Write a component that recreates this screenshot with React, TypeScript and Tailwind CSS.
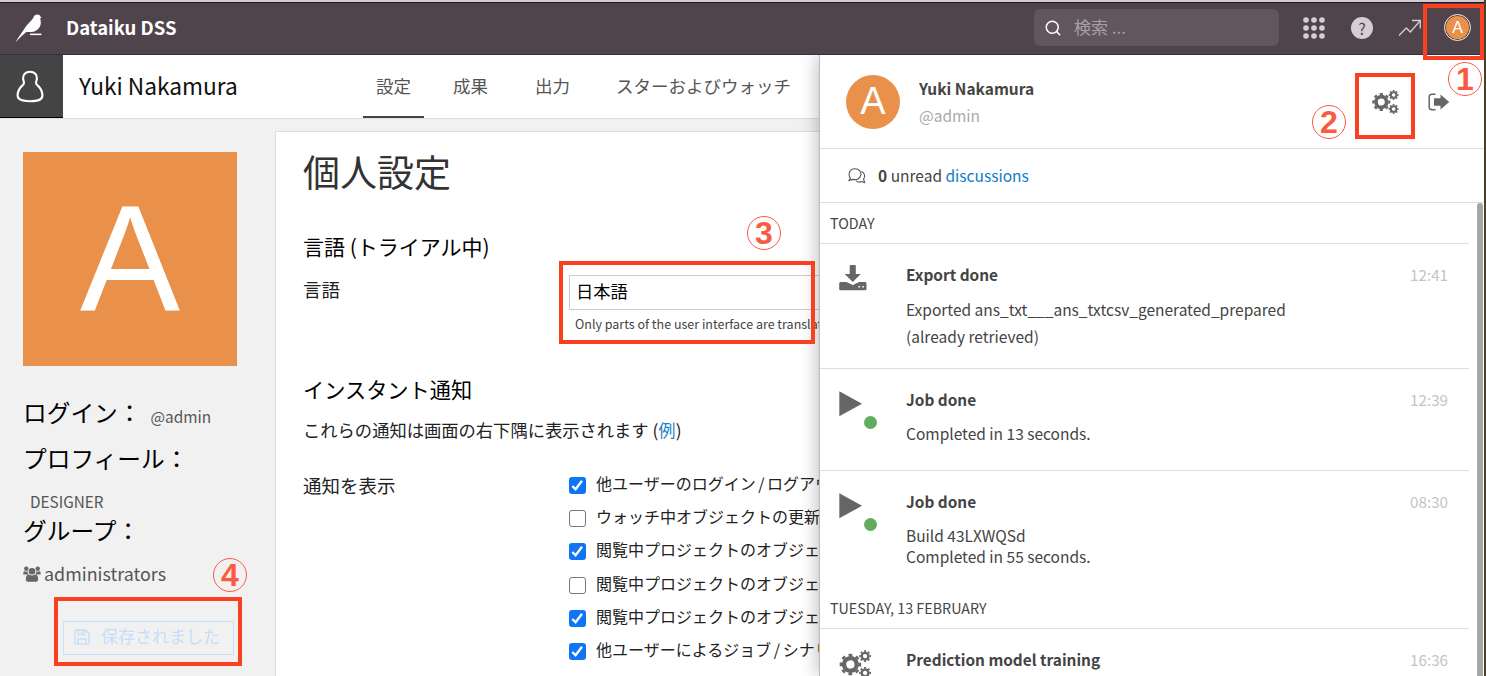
import type { ReactNode } from 'react';
import { FiSearch } from 'react-icons/fi';

const TABS = [
  { label: '設定', className: 'mr-[16px] border-b-2 border-[#444]' },
  { label: '成果', className: 'mr-[21px]' },
  { label: '出力', className: 'mr-[20px]' },
  { label: 'スターおよびウォッチ', className: '' },
];

const NOTIFICATIONS = [
  { label: '他ユーザーのログイン / ログアウト', checked: true },
  { label: 'ウォッチ中オブジェクトの更新', checked: false },
  { label: '閲覧中プロジェクトのオブジェクト', checked: true },
  { label: '閲覧中プロジェクトのオブジェクト', checked: false },
  { label: '閲覧中プロジェクトのオブジェクト', checked: true },
  { label: '他ユーザーによるジョブ / シナリオ', checked: true },
];

function BirdLogo() {
  return (
    <svg viewBox="0 0 28 30" className="h-[30px] w-[28px] shrink-0" fill="#fff">
      <path d="M0.3 29.4 C4 23.5 7 19.5 9.4 15.8 C12 11 16 8.5 18.2 5 C18.8 2.8 20.4 1.4 22.6 1.6 C24.3 1.7 25.1 2.6 25.3 3.5 L26.6 4.3 L25.4 4.9 C25 6.2 26 7.6 25.8 10.2 C25.4 15 21.5 18.6 16.5 19 L11.2 19 C8 21.6 4.2 25.8 0.3 29.4 Z" />
      <rect x="15" y="20.6" width="11.5" height="1.5" />
    </svg>
  );
}

function PersonIcon() {
  return (
    <svg viewBox="0 0 28 33" className="mr-[3px] h-[33px] w-[28px]" fill="none" stroke="#fff" strokeWidth="2.1">
      <path d="M14 1.8 C9.3 1.8 6.9 4.8 7.1 8.4 C7.2 10.8 8.8 12.4 7.6 14.2 C5.8 16.4 1.6 18.4 1.6 25.6 C1.6 29.8 5.5 31.2 14 31.2 C22.5 31.2 26.4 29.8 26.4 25.6 C26.4 18.4 22.2 16.4 20.4 14.2 C19.2 12.4 20.8 10.8 20.9 8.4 C21.1 4.8 18.7 1.8 14 1.8 Z" />
    </svg>
  );
}

function AppsIcon() {
  return (
    <svg viewBox="0 0 22 22" className="size-[22px]" fill="#d3cfd2">
      {[3, 11, 19].map((y) => [3, 11, 19].map((x) => <circle key={`${x}-${y}`} cx={x} cy={y} r="2.8" />))}
    </svg>
  );
}

function TrendIcon() {
  return (
    <svg viewBox="0 0 24 18" className="h-[18px] w-[24px]" fill="none" stroke="#d3cfd2" strokeWidth="1.3">
      <path d="M1 16.5 L8.3 9 L12.3 13 L22 2" />
      <path d="M14 1.5 H22.3 V9.5" />
    </svg>
  );
}

function Cog({ cx, cy, r, width, tooth }: { cx: number; cy: number; r: number; width: number; tooth: number }) {
  return (
    <g fill="none" stroke="#666" transform={`rotate(-11 ${cx} ${cy})`}>
      <circle cx={cx} cy={cy} r={r} strokeWidth={width} />
      <circle
        cx={cx}
        cy={cy}
        r={r + width / 2 + tooth / 2 - 0.2}
        strokeWidth={tooth}
        pathLength="16"
        strokeDasharray="1 1"
      />
    </g>
  );
}

function CogsIcon({ className }: { className: string }) {
  return (
    <svg viewBox="0 0 28 26" className={className}>
      <Cog cx={9.3} cy={13} r={5.3} width={3.7} tooth={2.1} />
      <Cog cx={21.6} cy={6} r={2.8} width={2} tooth={1.4} />
      <Cog cx={21.6} cy={20} r={2.8} width={2} tooth={1.4} />
    </svg>
  );
}

function SignOutIcon() {
  return (
    <svg viewBox="0 0 22 18" className="h-[18px] w-[22px]">
      <path d="M7.5 1.2 H4 Q1.2 1.2 1.2 4 V14 Q1.2 16.8 4 16.8 H7.5" fill="none" stroke="#666" strokeWidth="1.5" />
      <path d="M6 5.2 H12.5 V1.6 L21.2 9 L12.5 16.4 V12.8 H6 Z" fill="#666" />
    </svg>
  );
}

function UsersIcon() {
  return (
    <svg viewBox="0 0 18 16" className="h-[16px] w-[18px]" fill="#666">
      <circle cx="3.3" cy="2.8" r="2.2" />
      <circle cx="14.7" cy="2.8" r="2.2" />
      <path d="M0.3 8.6 V7 Q0.3 5.3 1.8 5.3 Q3.3 6.2 4.8 5.4 Q4.6 7.4 5.6 8.6 Z" />
      <path d="M17.7 8.6 V7 Q17.7 5.3 16.2 5.3 Q14.7 6.2 13.2 5.4 Q13.4 7.4 12.4 8.6 Z" />
      <circle cx="9" cy="5.2" r="3.3" />
      <path d="M2.8 13.6 C2.8 10.5 3.8 8.6 6 8.6 C8 9.9 10 9.9 12 8.6 C14.2 8.6 15.2 10.5 15.2 13.6 Q15.2 15.8 13 15.8 H5 Q2.8 15.8 2.8 13.6 Z" />
    </svg>
  );
}

function SaveIcon() {
  return (
    <svg viewBox="0 0 16 16" className="size-[16px]" fill="none" stroke="currentColor" strokeWidth="1.4">
      <path d="M1 2 Q1 1 2 1 H11.5 L15 4.5 V14 Q15 15 14 15 H2 Q1 15 1 14 Z" />
      <path d="M4 15 V10 H12 V15 M4 1 V5.6 H10.5 V1 M8 1.8 V4.5" />
    </svg>
  );
}

function DiscussionIcon() {
  return (
    <svg viewBox="0 0 18 16" className="h-[16px] w-[18px]" fill="none" stroke="#555" strokeWidth="1.1">
      <path d="M2.4 10.3 C-0.2 6.5 1.3 0.8 6.7 0.8 C11.5 0.8 13.4 4.2 12.8 7.2 C12 11 8.5 12.2 5.2 11.4 L1 12.4 Z" />
      <path d="M13.5 3.5 C17 4.8 17.3 8.6 15.6 11 L16.6 14.6 L13.6 13.6 C11.3 14.6 9.3 14 8 12.8" />
    </svg>
  );
}

function DownloadIcon() {
  return (
    <svg viewBox="0 0 28 26" className="mt-[2px] h-[26px] w-[28px]" fill="#666">
      <path d="M10.7 0.8 Q10.7 0 11.5 0 H16 Q16.8 0 16.8 0.8 V9 H21.8 L13.8 17 L5.7 9 H10.7 Z" />
      <path
        fillRule="evenodd"
        d="M1.5 17 H10 L13.8 20 L17.6 17 H26.2 Q27.5 17 27.5 18.5 V23.8 Q27.5 25.3 26.2 25.3 H1.5 Q0.2 25.3 0.2 23.8 V18.5 Q0.2 17 1.5 17 Z M19.4 21 h1.6 v1.6 h-1.6 Z M23.2 21 h1.6 v1.6 h-1.6 Z"
      />
      <path d="M7.7 16.4 L13.8 19.3 L19.9 16.4" fill="none" stroke="#fff" strokeWidth="1.4" />
    </svg>
  );
}

function Checkbox({ checked }: { checked: boolean }) {
  if (!checked) {
    return <span className="mt-[2px] size-[17px] shrink-0 rounded-[3px] border border-[#767676] bg-white" />;
  }
  return (
    <span className="mt-px flex size-[17px] shrink-0 items-center justify-center rounded-[3px] bg-[#0f75f5]">
      <svg viewBox="0 0 17 17" className="size-[17px]" fill="none" stroke="#fff" strokeWidth="2.3">
        <path d="M3.3 9 L6.6 12.3 L13 3.7" />
      </svg>
    </span>
  );
}

function JobIcon() {
  return (
    <span className="relative mt-[3px] block h-10 w-10">
      <svg viewBox="0 0 24 26" className="h-[26px] w-[24px]" fill="#666">
        <path d="M0.3 0.3 L23 12.8 L0.3 25.3 Z" />
      </svg>
      <span className="absolute top-[25px] left-[25px] size-[13px] rounded-full bg-[#62ac5d]" />
    </span>
  );
}

interface ActivityItemProps {
  icon: ReactNode;
  title: string;
  time: string;
  className: string;
  children?: ReactNode;
}

function ActivityItem({ icon, title, time, className, children }: ActivityItemProps) {
  return (
    <div className={`mr-[15px] flex shrink-0 border-[#ddd] pt-[19px] pl-[19px] ${className}`}>
      <div className="w-[67px] shrink-0">{icon}</div>
      <div className="flex-1 text-[15.5px] text-[#444]">
        <div className="flex justify-between pr-[21px] leading-[22px]">
          <b className="text-[15.4px] font-bold">{title}</b>
          <span className="text-[15.2px] text-[#c4c4c4]">{time}</span>
        </div>
        {children}
      </div>
    </div>
  );
}

/** Circled step number placed over the page. */
function Step({ n, className }: { n: number; className: string }) {
  return (
    <span
      className={`absolute z-30 flex size-[34px] items-center justify-center rounded-full border-[1.5px] border-[#fb5a42] font-['Liberation_Sans',sans-serif] text-[32px] leading-none font-bold text-[#fb5a42] ${className}`}
    >
      {n}
    </span>
  );
}

function Highlight({ className }: { className: string }) {
  return <span className={`absolute z-20 border-4 border-[#f9411f] ${className}`} />;
}

function Sidebar() {
  return (
    <aside className="flex w-[275px] shrink-0 flex-col pt-[33px] pl-[23px] text-[#555]">
      <div className="flex size-[214px] items-center justify-center bg-[#e9914a] pb-[3px] font-['Liberation_Sans',sans-serif] text-[150px] leading-none text-white">
        A
      </div>
      <div className="mt-[30px] flex h-[34px] items-center text-[23.7px] text-black">
        ログイン：
        <span className="mt-[8px] ml-[9px] text-[15.4px] text-[#555]">@admin</span>
      </div>
      <div className="mt-[12px] h-[34px] text-[23.7px] leading-[33px] text-black">プロフィール：</div>
      <div className="mt-[14px] ml-[7px] text-[15.3px] leading-[22px]">DESIGNER</div>
      <div className="mt-px h-[34px] text-[23.7px] leading-[34px] text-black">グループ：</div>
      <div className="mt-[13px] flex h-7 items-center gap-[3px] text-[17.9px]">
        <UsersIcon />
        <span className="-mt-[2px]">administrators</span>
      </div>
      <button
        type="button"
        className="mt-[33px] ml-[40px] flex h-[34px] w-[171px] items-center gap-[11px] border border-[#c8dff8] pb-[3px] pl-[10px] text-[17px] text-[#c5defa]"
      >
        <SaveIcon />
        <span className="-mt-px">保存されました</span>
      </button>
    </aside>
  );
}

function Settings() {
  return (
    <main className="mt-[12px] -mb-1 flex w-[700px] shrink-0 flex-col border border-[#ddd] bg-white pl-[27px] text-[#222]">
      <h1 className="mt-[13px] text-[37px] leading-[52px] text-[#333]">個人設定</h1>
      <h2 className="mt-[34px] text-[21px] leading-[30px] text-black">言語 (トライアル中)</h2>
      <div className="mt-[14px] flex">
        <span className="-mt-[2px] w-[266px] text-[18.5px] leading-[32px]">言語</span>
        <div>
          <div className="h-[35px] w-[400px] border border-[#ccc] pl-[6px] text-[17.3px] leading-[30px] text-black">
            日本語
          </div>
          <p className="mt-[3px] pl-[6px] text-[12.5px] leading-[22px] text-[#444]">
            Only parts of the user interface are translated
          </p>
        </div>
      </div>
      <h2 className="mt-[37px] text-[21.2px] leading-[34px] text-black">インスタント通知</h2>
      <p className="mt-[10px] text-[17.3px] leading-[28px]">
        これらの通知は画面の右下隅に表示されます (<a className="text-[#1b82c9]">例</a>)
      </p>
      <div className="mt-[24px] flex">
        <span className="w-[266px] pt-[2px] text-[18.5px] leading-[30px]">通知を表示</span>
        <ul>
          {NOTIFICATIONS.map((item, i) => (
            <li
              key={i}
              className="flex h-[33.3px] items-center gap-[10px] text-[16px] leading-[32px] [word-spacing:-1px] whitespace-nowrap"
            >
              <Checkbox checked={item.checked} />
              <span className="-mt-[4px]">{item.label}</span>
            </li>
          ))}
        </ul>
      </div>
    </main>
  );
}

function ProfilePanel() {
  return (
    <section className="absolute top-[55px] right-0 bottom-0 z-10 flex w-[665px] flex-col border-l border-[#bbb] bg-white text-[15.5px] text-[#444] shadow-[0_0_18px_rgba(0,0,0,0.3)] [clip-path:inset(0_0_0_-30px)]">
      <div className="flex h-[94px] shrink-0 items-center border-b border-[#ddd] pl-[26px]">
        <span className="flex size-[54px] items-center justify-center rounded-full bg-[#e9914a] font-['Liberation_Sans',sans-serif] text-[38px] text-white">
          A
        </span>
        <div className="mt-px ml-[19px] flex-1 leading-[27px]">
          <b className="block">Yuki Nakamura</b>
          <span className="block text-[#aaa]">@admin</span>
        </div>
        <CogsIcon className="mr-[28px] h-[26px] w-[28px]" />
        <span className="mr-[34px]">
          <SignOutIcon />
        </span>
      </div>
      <div className="flex h-[54px] shrink-0 items-center border-b border-[#ddd] pl-[28px]">
        <DiscussionIcon />
        <p className="ml-[12px]">
          <b>0</b> unread <a className="text-[#0f7bc8]">discussions</a>
        </p>
      </div>
      <div className="relative flex min-h-0 flex-1 flex-col overflow-hidden">
        <div className="mr-[15px] h-[41px] shrink-0 border-b border-[#ddd] pl-[10px] text-[14.3px] leading-[40px]">TODAY</div>
        <ActivityItem icon={<DownloadIcon />} title="Export done" time="12:41" className="h-[125px] border-b">
          <p className="mt-[11px] leading-[27px]">
            Exported ans_txt___ans_txtcsv_generated_prepared
            <br />
            (already retrieved)
          </p>
        </ActivityItem>
        <ActivityItem icon={<JobIcon />} title="Job done" time="12:39" className="h-[102px] border-b">
          <p className="mt-[13px] leading-[21px]">Completed in 13 seconds.</p>
        </ActivityItem>
        <ActivityItem icon={<JobIcon />} title="Job done" time="08:30" className="h-[117px]">
          <p className="mt-[13px] leading-[21px]">
            Build 43LXWQSd
            <br />
            Completed in 55 seconds.
          </p>
        </ActivityItem>
        <div className="mr-[15px] h-[41px] shrink-0 border-b border-[#ddd] pl-[10px] text-[14.3px] leading-[39px]">
          TUESDAY, 13 FEBRUARY
        </div>
        <ActivityItem
          icon={<CogsIcon className="mt-px h-[31px] w-[34px]" />}
          title="Prediction model training"
          time="16:36"
          className="h-[120px]"
        />
        <span className="absolute top-0 right-[1px] h-[600px] w-[6px] rounded-full bg-[#a6a6a6]" />
      </div>
    </section>
  );
}

export default function App() {
  return (
    <div className="relative flex h-[676px] w-[1486px] flex-col overflow-hidden border-r-2 border-[#4a4028] bg-[#f1f1f1] font-['Noto_Sans_CJK_JP',sans-serif]">
      <div className="h-[2px] shrink-0 bg-[#cfcccf]" />
      <header className="flex h-[53px] shrink-0 items-center border-t border-b border-t-[#2f0c28] border-b-[#3a2c38] bg-[#4f434c] pb-[2px] pl-[15px]">
        <BirdLogo />
        <span className="ml-[23px] flex-1 text-[18.5px] font-bold text-white">Dataiku DSS</span>
        <div className="flex h-[37px] w-[245px] items-center gap-[12px] rounded-md bg-[#61565e] pl-[10px] text-[17px] text-[#a79fa5]">
          <FiSearch className="size-[18px] text-white" />
          <span className="-mt-px">検索 ...</span>
        </div>
        <span className="ml-[24px]">
          <AppsIcon />
        </span>
        <span className="ml-[26px] flex size-[22px] items-center justify-center rounded-full bg-[#d3cfd2] text-[16px] leading-none text-[#4f434c]">
          ?
        </span>
        <span className="ml-[25px]">
          <TrendIcon />
        </span>
        <span className="mr-[13px] ml-[22px] flex size-[27px] items-center justify-center rounded-full border-[1.5px] border-[#e8e0dc] bg-[#e9914a] font-['Liberation_Sans',sans-serif] text-[16px] text-white shadow-[inset_0_0_0_1px_#4f434c]">
          A
        </span>
      </header>
      <div className="flex h-[64px] shrink-0 items-start border-b border-[#ddd] bg-white">
        <div className="flex h-[63px] w-[63px] items-center justify-center border-b border-black bg-[#444]">
          <PersonIcon />
        </div>
        <span className="ml-[16px] w-[284px] text-[22.7px] leading-[62px] text-[#111]">Yuki Nakamura</span>
        <nav className="flex text-[17.5px] leading-[61px] text-[#555]">
          {TABS.map((tab) => (
            <span key={tab.label} className={`h-[63px] px-[13px] ${tab.className}`}>
              {tab.label}
            </span>
          ))}
        </nav>
      </div>
      <div className="flex min-h-0 flex-1">
        <Sidebar />
        <Settings />
      </div>
      <ProfilePanel />
      <Highlight className="top-[4px] left-[1423px] h-[56px] w-[61px]" />
      <Highlight className="top-[73px] left-[1355px] h-[66px] w-[60px]" />
      <Highlight className="top-[261px] left-[559px] h-[83px] w-[256px]" />
      <Highlight className="top-[597px] left-[54px] h-[69px] w-[188px]" />
      <Step n={1} className="top-[62px] left-[1448px]" />
      <Step n={2} className="top-[105px] left-[1312px]" />
      <Step n={3} className="top-[216px] left-[747px]" />
      <Step n={4} className="top-[558px] left-[213px]" />
    </div>
  );
}
